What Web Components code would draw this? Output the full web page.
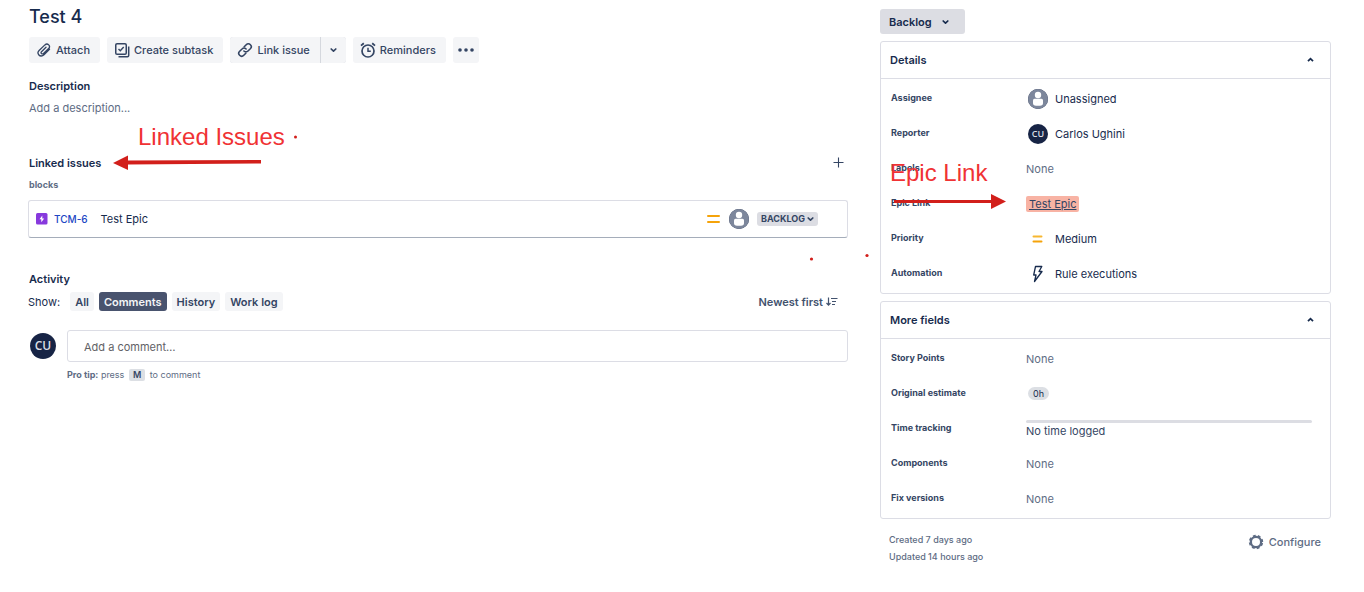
<!DOCTYPE html>
<html lang="en">
<head>
  <meta charset="UTF-8">
  <meta name="viewport" content="width=device-width, initial-scale=1.0">
  <title>Test 4</title>
  <style>
    body {
      margin: 0;
      background: #fff;
      color: #172b4d;
      font: 11px/16px Inter, "Liberation Sans", sans-serif;
      --ink: #172b4d;
      --text: #344563;
      --muted: #5e6c84;
      --line: #dcdde5;
      --soft: #f4f5f7;
    }
  </style>
</head>
<body>
  <issue-page>
    <issue-main slot="main"></issue-main>
    <issue-side slot="side"></issue-side>
  </issue-page>

  <template id="tpl-issue-page">
    <style>
      :host { display: block; }
      .page {
        display: grid;
        grid-template-columns: minmax(0, 820fr) minmax(0, 451fr);
        gap: 32px;
        padding: 5px 33px 24px 28px;
      }
    </style>
    <div class="page">
      <slot name="main"></slot>
      <slot name="side"></slot>
    </div>
  </template>

  <template id="tpl-tool-button">
    <style>
      :host { display: block; color: var(--text); }
      button {
        display: flex;
        align-items: center;
        gap: 4px;
        height: 26px;
        padding: 0 10px 0 7px;
        border: 0;
        border-radius: 3px;
        background: var(--soft);
        color: inherit;
        font: inherit;
        font-weight: 500;
        cursor: pointer;
      }
      :host([only]) button { width: 26px; padding: 0; justify-content: center; }
      :host([joined=left]) button { border-radius: 3px 0 0 3px; }
      :host([joined=right]) button { width: 25px; border-radius: 0 3px 3px 0; }
    </style>
    <button type="button"><slot></slot></button>
  </template>

  <template id="tpl-filter-tab">
    <style>
      :host { display: block; }
      button {
        display: block;
        height: 19px;
        padding: 0 5px;
        border: 0;
        border-radius: 3px;
        background: var(--soft);
        color: var(--text);
        font: inherit;
        font-weight: 600;
        cursor: pointer;
      }
      :host([active]) button { background: #49536e; color: #f4f5f7; }
    </style>
    <button type="button"><slot></slot></button>
  </template>

  <template id="tpl-user-avatar">
    <style>
      :host {
        display: flex;
        flex: none;
        align-items: center;
        justify-content: center;
        width: 20px;
        height: 20px;
        border-radius: 50%;
        background: #172445;
        color: #dcdfe4;
        font: 600 9px/9px "Open Sans", sans-serif;
      }
      :host([size=large]) { width: 26px; height: 26px; font-size: 12px; line-height: 12px; }
    </style>
    <slot></slot>
  </template>

  <template id="tpl-status-select">
    <style>
      :host { display: inline-grid; color: var(--ink); font-weight: 600; }
      select, app-icon { grid-area: 1 / 1; }
      select {
        appearance: none;
        height: 25px;
        padding: 0 33px 0 9px;
        border: 0;
        border-radius: 3px;
        background: #dcdde3;
        color: inherit;
        font: inherit;
        cursor: pointer;
      }
      app-icon { place-self: center end; margin-right: 15px; pointer-events: none; }
      :host([small]) { color: var(--text); font-size: 9px; font-weight: 700; line-height: 14px; }
      :host([small]) select { height: 14px; padding: 0 13px 0 4px; }
      :host([small]) app-icon { margin-right: 3px; }
    </style>
    <select aria-label="Status"><option></option></select>
    <app-icon name="down"></app-icon>
  </template>

  <template id="tpl-linked-card">
    <style>
      :host {
        display: flex;
        align-items: center;
        box-sizing: border-box;
        height: 38px;
        padding: 0 29px 0 7px;
        border: 1px solid var(--line);
        border-bottom-color: #a5adba;
        border-radius: 3px;
      }
      a { text-decoration: none; }
      .key { margin-left: 6px; color: #2047c4; font-size: 10px; font-weight: 500; }
      .title { flex: 1; margin-left: 13px; color: var(--ink); }
      user-avatar { margin: 0 8px 0 9px; }
    </style>
    <app-icon name="epic"></app-icon>
    <a class="key" href="#TCM-6"><slot name="key"></slot></a>
    <a class="title" href="#TCM-6"><slot></slot></a>
    <app-icon name="medium"></app-icon>
    <user-avatar><app-icon name="person"></app-icon></user-avatar>
    <status-select small label="BACKLOG"></status-select>
  </template>

  <!-- hand-drawn remark with an arrow, laid over the page -->
  <template id="tpl-callout-note">
    <style>
      :host {
        position: absolute;
        color: #f03234;
        font: 24px/28px "Liberation Sans", Arial, sans-serif;
        white-space: nowrap;
        pointer-events: none;
      }
      svg { position: absolute; overflow: visible; left: 0; top: 0; }
      .epic { display: none; }
      :host([kind=epic]) .epic { display: block; }
      :host([kind=epic]) .linked { display: none; }
    </style>
    <slot></slot>
    <svg class="linked" width="1" height="1" fill="#d21f1b">
      <path d="M-11 37.500 L123 37 V40.500 L-11 41.500 Z"/>
      <path d="M-25 40 L-10 32.500 V47 Z"/>
      <circle cx="157.500" cy="14" r="1.500"/>
      <circle cx="673.500" cy="136" r="1.600"/>
      <circle cx="729" cy="132.500" r="1.600"/>
    </svg>
    <svg class="epic" width="1" height="1" fill="#d21f1b">
      <path d="M4 41 H101 V44 H4 Z"/>
      <path d="M101 35 L116 42.500 L101 50 Z"/>
    </svg>
  </template>

  <template id="tpl-issue-main">
    <style>
      :host { display: block; }
      h1, h2, h3, p { margin: 0; }
      h1, h2, h3, .desc, .tools { padding-left: 1px; }
      h1 { font-size: 18px; line-height: 24px; font-weight: 500; }
      h2 { font-size: 11px; line-height: 16px; font-weight: 600; }
      .tools { display: flex; gap: 7px; margin: 8px 0 15px; }
      .split { display: flex; gap: 1px; background: #d5d8de; border-radius: 3px; }
      .desc { margin-top: 6px; color: var(--muted); }
      .linked { position: relative; margin-top: 39px; }
      .head { display: flex; justify-content: space-between; align-items: center; }
      .add {
        display: flex;
        padding: 0 3px;
        border: 0;
        background: none;
        color: var(--text);
        cursor: pointer;
      }
      h3 { margin: 8px 0 9px; color: var(--muted); font-size: 9px; line-height: 12px; font-weight: 700; }
      callout-note { left: 110px; top: -32px; }
      .activity { margin-top: 33px; }
      .filters { display: flex; align-items: center; gap: 5px; margin: 5px 0 19px; }
      .filters span { margin-right: 5px; }
      .sort {
        display: flex;
        align-items: center;
        gap: 3px;
        margin-left: auto;
        padding: 0 10px 0 0;
        border: 0;
        background: none;
        color: #42526e;
        font: inherit;
        font-weight: 600;
        cursor: pointer;
      }
      .comment { display: grid; grid-template-columns: auto 1fr; column-gap: 11px; align-items: center; padding-left: 2px; }
      input {
        box-sizing: border-box;
        width: 100%;
        height: 32px;
        padding: 2px 16px 0;
        border: 1px solid var(--line);
        border-radius: 3px;
        color: inherit;
        font: inherit;
      }
      input::placeholder { color: #626266; opacity: 1; }
      .tip { grid-column: 2; margin-top: 7px; color: var(--muted); font-size: 9px; line-height: 12px; }
      kbd {
        display: inline-block;
        margin: 0 2px;
        padding: 0 4px;
        border-radius: 2px;
        background: #dcdfe4;
        color: var(--text);
        font: inherit;
        font-weight: 600;
      }
    </style>
    <h1>Test 4</h1>
    <div class="tools">
      <tool-button><app-icon name="clip"></app-icon>Attach</tool-button>
      <tool-button><app-icon name="subtask"></app-icon>Create subtask</tool-button>
      <div class="split">
        <tool-button joined="left"><app-icon name="link"></app-icon>Link issue</tool-button>
        <tool-button only joined="right" label="More link options"><app-icon name="down"></app-icon></tool-button>
      </div>
      <tool-button><app-icon name="alarm"></app-icon>Reminders</tool-button>
      <tool-button only label="More actions"><app-icon name="more"></app-icon></tool-button>
    </div>
    <h2>Description</h2>
    <p class="desc">Add a description...</p>

    <section class="linked">
      <div class="head">
        <h2>Linked issues</h2>
        <button class="add" type="button" aria-label="Link an issue"><app-icon name="plus"></app-icon></button>
      </div>
      <h3>blocks</h3>
      <linked-card><span slot="key">TCM-6</span>Test Epic</linked-card>
      <callout-note>Linked Issues</callout-note>
    </section>

    <section class="activity">
      <h2>Activity</h2>
      <div class="filters">
        <span>Show:</span>
        <filter-tab>All</filter-tab>
        <filter-tab active>Comments</filter-tab>
        <filter-tab>History</filter-tab>
        <filter-tab>Work log</filter-tab>
        <button class="sort" type="button">Newest first<app-icon name="sort"></app-icon></button>
      </div>
      <div class="comment">
        <user-avatar size="large">CU</user-avatar>
        <input type="text" aria-label="Add a comment" placeholder="Add a comment…">
        <p class="tip"><b>Pro tip:</b> press <kbd>M</kbd> to comment</p>
      </div>
    </section>
  </template>

  <template id="tpl-side-panel">
    <style>
      :host { display: block; border: 1px solid var(--line); border-radius: 3px; }
      button {
        display: flex;
        justify-content: space-between;
        align-items: center;
        width: 100%;
        height: 37px;
        padding: 0 15px 0 9px;
        border: 0;
        border-bottom: 1px solid var(--line);
        background: none;
        color: var(--ink);
        font: inherit;
        font-weight: 600;
        cursor: pointer;
      }
      .rows { padding: 1px 18px 3px 10px; }
    </style>
    <button type="button" aria-expanded="true"><slot name="title"></slot><app-icon name="up"></app-icon></button>
    <div class="rows"><slot></slot></div>
  </template>

  <template id="tpl-field-row">
    <style>
      :host {
        display: grid;
        grid-template-columns: 135px minmax(0, 1fr);
        align-items: center;
        position: relative;
        height: 35px;
      }
      .label { color: var(--text); font-size: 9px; line-height: 14px; font-weight: 700; }
      .value { display: flex; align-items: center; gap: 7px; padding-top: 2px; color: var(--ink); }
      :host([empty]) .value { color: var(--muted); }
      :host([icon]) .value { padding-left: 2px; }
      :host([stack]) .value { flex-direction: column; align-items: stretch; gap: 0; padding-top: 4px; color: var(--text); }
    </style>
    <span class="label"><slot name="label"></slot></span>
    <div class="value"><slot></slot></div>
    <slot name="note"></slot>
  </template>

  <template id="tpl-issue-side">
    <style>
      :host { display: block; padding-top: 4px; }
      status-select { vertical-align: top; }
      side-panel { margin-top: 7px; }
      .epic {
        padding: 0 3px;
        border-radius: 2px;
        background: #f8b3a4;
        color: var(--text);
      }
      callout-note { left: -1px; top: -26px; }
      .hours {
        padding: 0 5px;
        border-radius: 7px;
        background: #dcdfe4;
        font-size: 9px;
        line-height: 13px;
      }
      .bar { height: 3px; border-radius: 2px; background: #dcdde3; }
      footer {
        display: flex;
        justify-content: space-between;
        align-items: flex-start;
        padding: 12px 10px 0 9px;
        color: var(--muted);
      }
      footer p { margin: 0; font-size: 9px; line-height: 17px; font-weight: 500; }
      footer button {
        display: flex;
        align-items: center;
        gap: 5px;
        margin-top: 3px;
        padding: 0;
        border: 0;
        background: none;
        color: inherit;
        font: inherit;
        font-weight: 500;
        cursor: pointer;
      }
    </style>
    <status-select label="Backlog"></status-select>
    <side-panel>
      <span slot="title">Details</span>
      <field-row icon><span slot="label">Assignee</span><user-avatar><app-icon name="person"></app-icon></user-avatar>Unassigned</field-row>
      <field-row icon><span slot="label">Reporter</span><user-avatar>CU</user-avatar>Carlos Ughini</field-row>
      <field-row empty><span slot="label">Labels</span>None</field-row>
      <field-row>
        <span slot="label">Epic Link</span>
        <a class="epic" href="#TCM-6">Test Epic</a>
        <callout-note slot="note" kind="epic">Epic Link</callout-note>
      </field-row>
      <field-row icon><span slot="label">Priority</span><app-icon name="medium-wide"></app-icon>Medium</field-row>
      <field-row icon><span slot="label">Automation</span><app-icon name="bolt"></app-icon>Rule executions</field-row>
    </side-panel>
    <side-panel>
      <span slot="title">More fields</span>
      <field-row empty><span slot="label">Story Points</span>None</field-row>
      <field-row icon><span slot="label">Original estimate</span><span class="hours">0h</span></field-row>
      <field-row stack><span slot="label">Time tracking</span><div class="bar"></div><span>No time logged</span></field-row>
      <field-row empty><span slot="label">Components</span>None</field-row>
      <field-row empty><span slot="label">Fix versions</span>None</field-row>
    </side-panel>
    <footer>
      <div>
        <p>Created 7 days ago</p>
        <p>Updated 14 hours ago</p>
      </div>
      <button type="button"><app-icon name="gear"></app-icon>Configure</button>
    </footer>
  </template>

  <script>
    // [width, height, markup]
    const ICONS = {
      clip: [16, 16, '<path d="M13.500 7.300 L8 12.800 C6.300 14.500 3.900 14.200 2.900 13 C1.700 11.700 1.800 9.800 3.100 8.500 L8.900 2.900 C10 1.900 11.700 1.900 12.700 2.900 C13.700 3.900 13.600 5.500 12.600 6.500 L7.500 11.500 C6.900 12.100 6 12.100 5.500 11.600 C4.900 11 5 10.200 5.500 9.700 L10 5.300" stroke-width="1.300" stroke-linecap="round"/>'],
      subtask: [16, 16, '<rect x="1.750" y="1.750" width="10.500" height="10.500" rx="1.300" stroke-width="1.500"/><path d="M4.500 7 L6.300 8.800 L9.700 5" stroke-width="1.400"/><path d="M14.700 4.500 V13.500 Q14.700 14.700 13.500 14.700 H4.500" stroke-width="1.500"/>'],
      link: [16, 16, '<path d="M7.200 4.700 L9.200 2.700 C10.400 1.500 12.200 1.500 13.400 2.700 C14.500 3.800 14.500 5.600 13.300 6.800 L11 9 C9.800 10.200 8 10.100 6.900 9" stroke-width="1.600" stroke-linecap="round"/><path d="M8.800 11.300 L6.800 13.300 C5.600 14.500 3.800 14.500 2.600 13.300 C1.500 12.200 1.500 10.400 2.700 9.200 L5 7 C6.200 5.800 8 5.900 9.100 7" stroke-width="1.600" stroke-linecap="round"/>'],
      alarm: [16, 16, '<circle cx="8" cy="9" r="6" stroke-width="1.700"/><path d="M8 5.800 V9.300 H10.800" stroke-width="1.500"/><path d="M1 3.600 L3.800 1.200 M12.200 1.200 L15 3.600" stroke-width="1.800"/>'],
      more: [16, 6, '<g fill="currentColor" stroke="none"><circle cx="2" cy="3" r="1.800"/><circle cx="8" cy="3" r="1.800"/><circle cx="14" cy="3" r="1.800"/></g>'],
      down: [9, 8, '<path d="M2.200 3 L4.500 5.200 L6.800 3" stroke-width="1.700" stroke-linecap="round" stroke-linejoin="round"/>'],
      up: [9, 8, '<path d="M2 5.200 L4.500 2.700 L7 5.200" stroke-width="1.800"/>'],
      plus: [12, 12, '<path d="M5.500 0.500 V10.500 M0.500 5.500 H10.500" stroke-width="1.100"/>'],
      epic: [12, 12, '<rect width="11.500" height="11.500" rx="1.500" fill="#8739dd" stroke="none"/><path d="M6.300 2.500 L3.500 6.200 H5.300 V9.200 L8.200 5.500 H6.300 Z" fill="#fff" stroke="none"/>'],
      medium: [13, 12, '<path d="M1 3 H12 M1 9 H12" stroke="#f5a30a" stroke-width="2" stroke-linecap="round"/>'],
      'medium-wide': [20, 12, '<path d="M5.500 3.500 H13.500" stroke="#f7b731" stroke-width="2" stroke-linecap="round"/><path d="M5.500 8.500 H13.500" stroke="#f5a30a" stroke-width="2" stroke-linecap="round"/>'],
      person: [20, 20, '<circle cx="10" cy="10" r="10" fill="#7d879c" stroke="none"/><circle cx="10" cy="6" r="3.200" fill="#fff" stroke="none"/><path d="M5 11.300 Q5 9.800 6.500 9.800 H13.500 Q15 9.800 15 11.300 V14 Q15 16.800 12 16.800 H8 Q5 16.800 5 14 Z" fill="#fff" stroke="none"/>'],
      bolt: [20, 18, '<path d="M7.500 1.500 H13.800 L11 6.500 H14 L6.500 16.500 L8 10 H5.700 Z" stroke="#172b4d" stroke-width="1.300" stroke-linejoin="round"/>'],
      sort: [12, 10, '<path d="M2.500 0.500 V8 M0.500 6 L2.500 8.200 L4.500 6" stroke-width="1.200"/><path d="M5 1.500 H11.500 M6 4.500 H10 M6 7.500 H9" stroke-width="1.100"/>'],
      gear: [16, 16, '<circle cx="8" cy="8" r="5.100" stroke-width="2.200"/><circle cx="8" cy="8" r="6.300" stroke-width="1.800" stroke-dasharray="2.800 2.148" stroke-dashoffset="-1.074"/>']
    };

    class AppIcon extends HTMLElement {
      constructor() {
        super();
        this.attachShadow({ mode: 'open' });
      }
      connectedCallback() {
        const [w, h, art] = ICONS[this.getAttribute('name')];
        this.shadowRoot.innerHTML = `
          <style>:host { display: block; flex: none; } svg { display: block; }</style>
          <svg width="${w}" height="${h}" viewBox="0 0 ${w} ${h}" fill="none" stroke="currentColor" aria-hidden="true">${art}</svg>`;
      }
    }
    customElements.define('app-icon', AppIcon);

    class TemplateElement extends HTMLElement {
      constructor() {
        super();
        const tpl    = document.getElementById('tpl-' + this.localName);
        const shadow = this.attachShadow({ mode: 'open' });
        shadow.appendChild(document.importNode(tpl.content, true));
      }
    }

    class ToolButton extends TemplateElement {
      connectedCallback() {
        const label = this.getAttribute('label');
        if (label) this.shadowRoot.querySelector('button').setAttribute('aria-label', label);
      }
    }
    customElements.define('tool-button', ToolButton);

    class StatusSelect extends TemplateElement {
      connectedCallback() {
        this.shadowRoot.querySelector('option').textContent = this.getAttribute('label');
      }
    }
    customElements.define('status-select', StatusSelect);

    customElements.define('user-avatar', class extends TemplateElement {});
    customElements.define('filter-tab', class extends TemplateElement {});
    customElements.define('linked-card', class extends TemplateElement {});
    customElements.define('callout-note', class extends TemplateElement {});
    customElements.define('side-panel', class extends TemplateElement {});
    customElements.define('field-row', class extends TemplateElement {});
    customElements.define('issue-main', class extends TemplateElement {});
    customElements.define('issue-side', class extends TemplateElement {});
    customElements.define('issue-page', class extends TemplateElement {});
  </script>
</body>
</html>
